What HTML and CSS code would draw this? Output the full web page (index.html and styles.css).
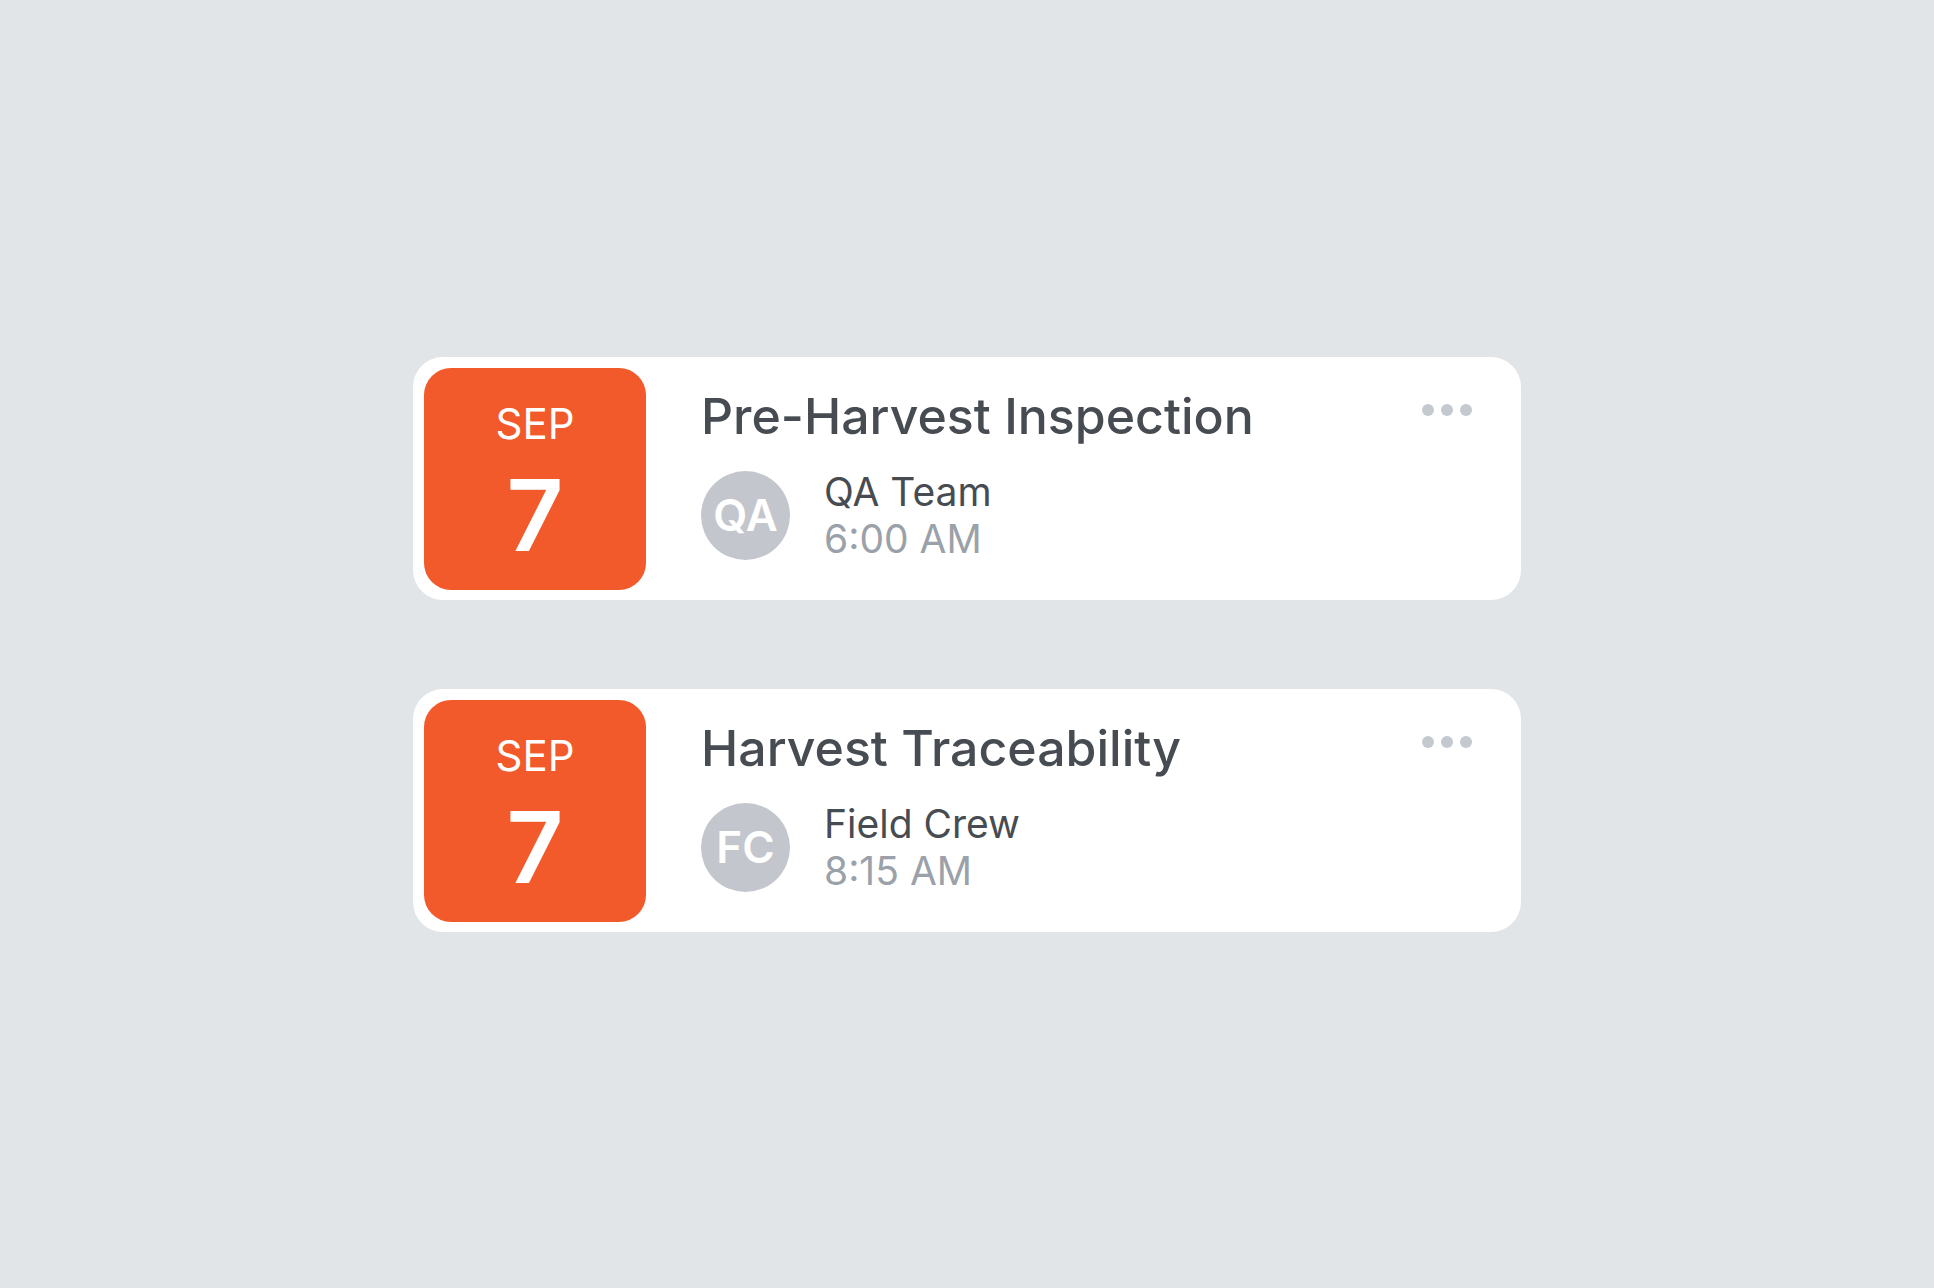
FILE: index.html
```html
<!DOCTYPE html>
<html lang="en">
<head>
<meta charset="utf-8">
<title>Schedule</title>
<link rel="stylesheet" href="styles.css">
</head>
<body>
<main class="list">
  <article class="card">
    <div class="date">
      <span class="month">SEP</span>
      <span class="day">7</span>
    </div>
    <div class="content">
      <h2 class="title">Pre-Harvest Inspection</h2>
      <div class="meta">
        <div class="avatar">QA</div>
        <div class="info">
          <div class="name">QA Team</div>
          <div class="time">6:00 AM</div>
        </div>
      </div>
    </div>
    <div class="more" aria-label="More"><span></span><span></span><span></span></div>
  </article>
  <article class="card">
    <div class="date">
      <span class="month">SEP</span>
      <span class="day">7</span>
    </div>
    <div class="content">
      <h2 class="title">Harvest Traceability</h2>
      <div class="meta">
        <div class="avatar">FC</div>
        <div class="info">
          <div class="name">Field Crew</div>
          <div class="time">8:15 AM</div>
        </div>
      </div>
    </div>
    <div class="more" aria-label="More"><span></span><span></span><span></span></div>
  </article>
</main>
</body>
</html>
```
FILE: styles.css
```css
* { box-sizing: border-box; }
html, body { margin: 0; padding: 0; }
body {
  width: 1934px;
  height: 1288px;
  background: #e1e5e8;
  font-family: Inter, "Noto Sans", sans-serif;
  display: flex;
  align-items: center;
  justify-content: center;
}
.list {
  display: flex;
  flex-direction: column;
  gap: 89px;
  width: 1108px;
}
.card {
  display: flex;
  align-items: flex-start;
  background: #ffffff;
  border-radius: 30px;
  padding: 11px 49px 10px 11px;
}
.date {
  width: 222px;
  height: 222px;
  flex: none;
  background: #f25a2b;
  border-radius: 27px;
  color: #ffffff;
  display: flex;
  flex-direction: column;
  align-items: center;
}
.month {
  font-size: 42px;
  line-height: 51px;
  margin-top: 30px;
  font-weight: 400;
}
.day {
  font-size: 99px;
  line-height: 120px;
  font-weight: 600;
  margin-top: 6px;
}
.content {
  flex: 1;
  margin-left: 55px;
  padding-top: 19px;
}
.title {
  margin: 0;
  font-size: 50px;
  line-height: 58px;
  font-weight: 500;
  color: #474c52;
}
.meta {
  display: flex;
  align-items: center;
  margin-top: 23px;
}
.avatar {
  width: 89px;
  height: 89px;
  margin-top: 1px;
  border-radius: 50%;
  background: #c3c7cd;
  color: #ffffff;
  font-size: 44px;
  font-weight: 600;
  display: flex;
  align-items: center;
  justify-content: center;
  flex: none;
}
.info {
  margin-left: 34px;
  font-size: 39px;
  line-height: 47px;
}
.name { color: #474c52; }
.time { color: #9aa1a9; }
.more {
  display: flex;
  gap: 7px;
  margin-top: 36px;
}
.more span {
  width: 12px;
  height: 12px;
  border-radius: 50%;
  background: #c4c8cf;
}
```
